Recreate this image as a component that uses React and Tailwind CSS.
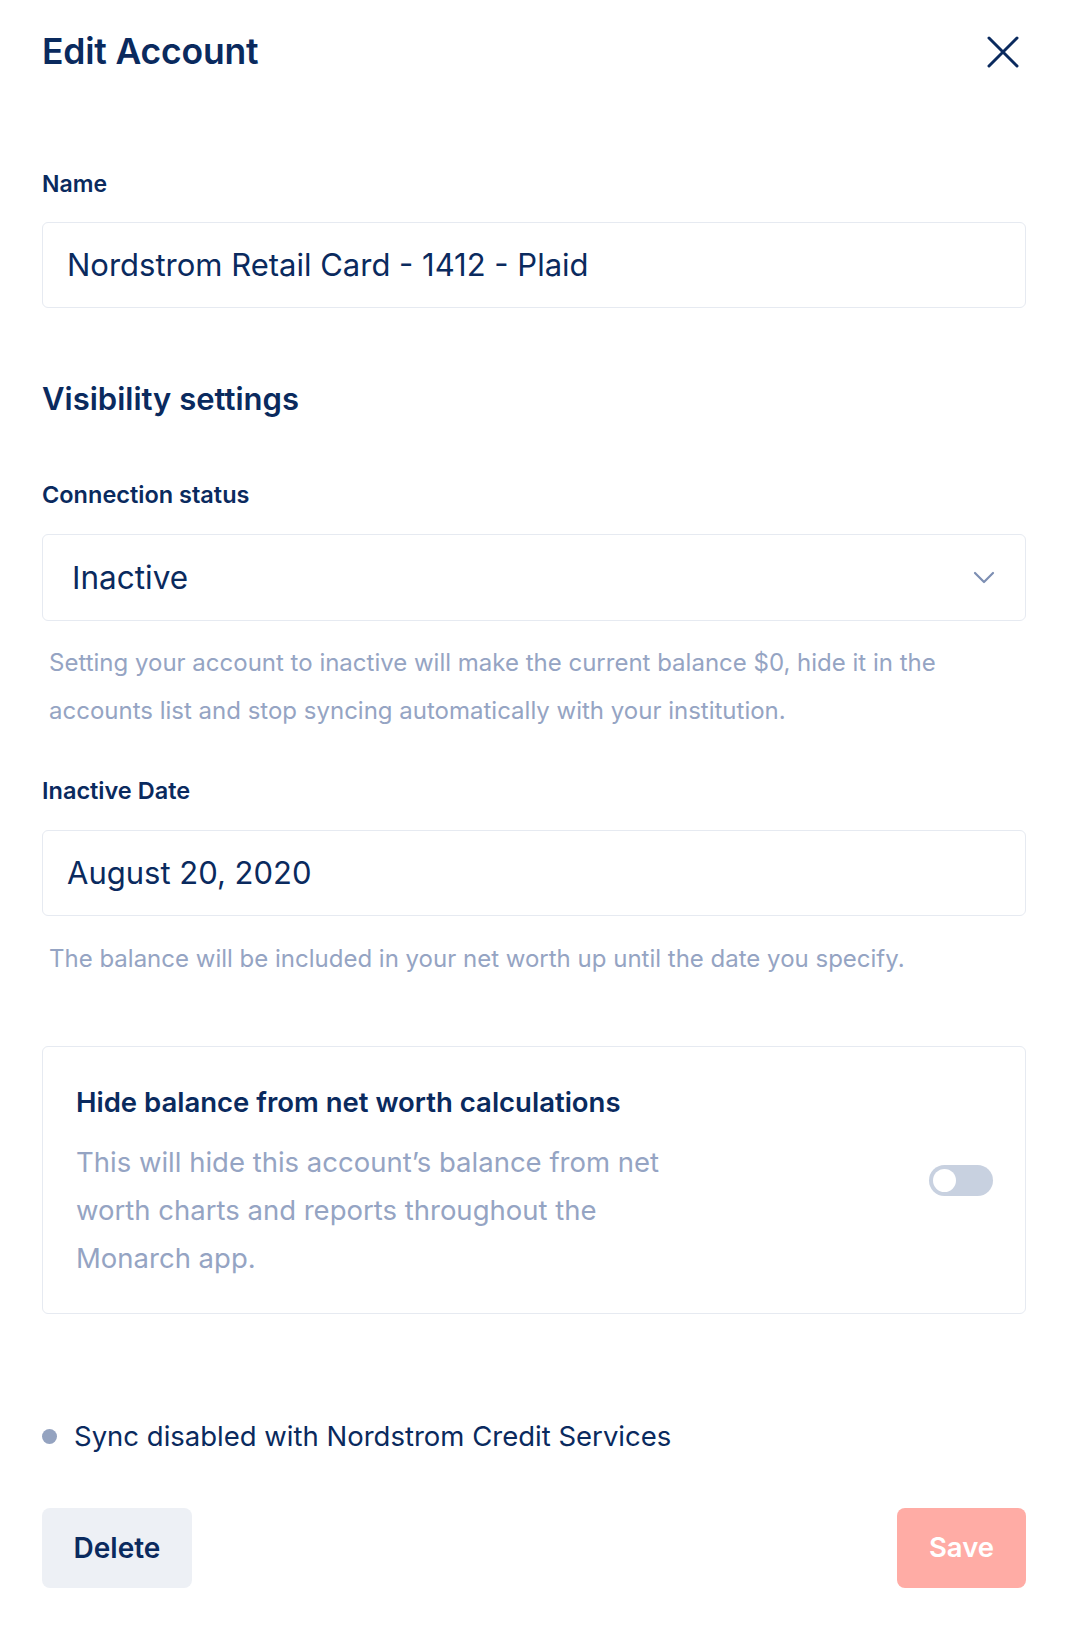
import React, { useState } from 'react';

const CloseIcon = () => (
  <svg width="32" height="32" viewBox="0 0 32 32" fill="none">
    <path d="M2 2 L30 30 M30 2 L2 30" stroke="#0a2a5e" strokeWidth="3" strokeLinecap="round" />
  </svg>
);

const Chevron = () => (
  <svg width="22" height="14" viewBox="0 0 22 14" fill="none">
    <path d="M2 2 L11 11 L20 2" stroke="#7d8fb3" strokeWidth="2.2" strokeLinecap="round" strokeLinejoin="round" />
  </svg>
);

export default function App() {
  const [hidden, setHidden] = useState(false);

  return (
    <div className="w-[1068px] min-h-[1628px] bg-white px-[42px] text-[#0a2a5e]" style={{ fontFamily: 'Inter, "Noto Sans", sans-serif' }}>
      <div className="mt-[32px] flex items-center justify-between">
        <h1 className="h-[40px] text-[35.5px] font-semibold leading-[40px] tracking-[-0.2px]">Edit Account</h1>
        <button className="mr-[7px] flex h-[32px] w-[32px] items-center justify-center">
          <CloseIcon />
        </button>
      </div>

      <div className="mt-[100px] text-[23px] font-semibold leading-[24px]">Name</div>
      <div className="mt-[26px] flex h-[86px] items-center rounded-[6px] border border-[#e6eaf1] pl-[24px] text-[31px] leading-[36px]">
        Nordstrom Retail Card - 1412 - Plaid
      </div>

      <h2 className="mt-[73px] text-[31px] font-semibold leading-[36px]">Visibility settings</h2>

      <div className="mt-[66px] text-[23.5px] font-semibold leading-[24px]">Connection status</div>
      <div className="mt-[27px] flex h-[87px] items-center justify-between rounded-[6px] border border-[#e6eaf1] pl-[29px] pr-[30px] text-[31.5px] leading-[36px]">
        <span>Inactive</span>
        <Chevron />
      </div>
      <p className="mt-[18px] w-[920px] pl-[7px] text-[24px] leading-[48px] text-[#95a4c3]">
        Setting your account to inactive will make the current balance $0, hide it in the accounts list and stop syncing automatically with your institution.
      </p>

      <div className="mt-[44px] text-[23.5px] font-semibold leading-[24px]">Inactive Date</div>
      <div className="mt-[27px] flex h-[86px] items-center rounded-[6px] border border-[#e6eaf1] pl-[24px] text-[31px] leading-[36px]">
        August 20, 2020
      </div>
      <p className="mt-[19px] pl-[7px] text-[24px] leading-[48px] text-[#95a4c3]">
        The balance will be included in your net worth up until the date you specify.
      </p>

      <div className="mt-[63px] flex h-[268px] items-center justify-between rounded-[6px] border border-[#e6eaf1] pl-[33px] pr-[32px]">
        <div className="w-[640px] pt-[8px]">
          <div className="text-[27.5px] font-semibold leading-[32px]">Hide balance from net worth calculations</div>
          <p className="mt-[20px] w-[605px] text-[27.5px] leading-[48px] text-[#95a4c3]">
            This will hide this account’s balance from net worth charts and reports throughout the Monarch app.
          </p>
        </div>
        <button
          onClick={() => setHidden(!hidden)}
          className="flex h-[31px] w-[64px] items-center rounded-full bg-[#c8d1e0] px-[4px]"
        >
          <span className="h-[23px] w-[23px] rounded-full bg-white" />
        </button>
      </div>

      <div className="mt-[106px] flex items-center">
        <span className="h-[15px] w-[15px] rounded-full bg-[#94a3c0]" />
        <span className="ml-[17px] text-[27.5px] leading-[32px]">Sync disabled with Nordstrom Credit Services</span>
      </div>

      <div className="mt-[56px] flex items-center justify-between">
        <button className="h-[80px] w-[150px] rounded-[8px] bg-[#edf0f5] text-[28px] font-semibold">Delete</button>
        <button className="h-[80px] w-[129px] rounded-[8px] bg-[#ffaca5] text-[27.5px] font-semibold text-white">Save</button>
      </div>
    </div>
  );
}
